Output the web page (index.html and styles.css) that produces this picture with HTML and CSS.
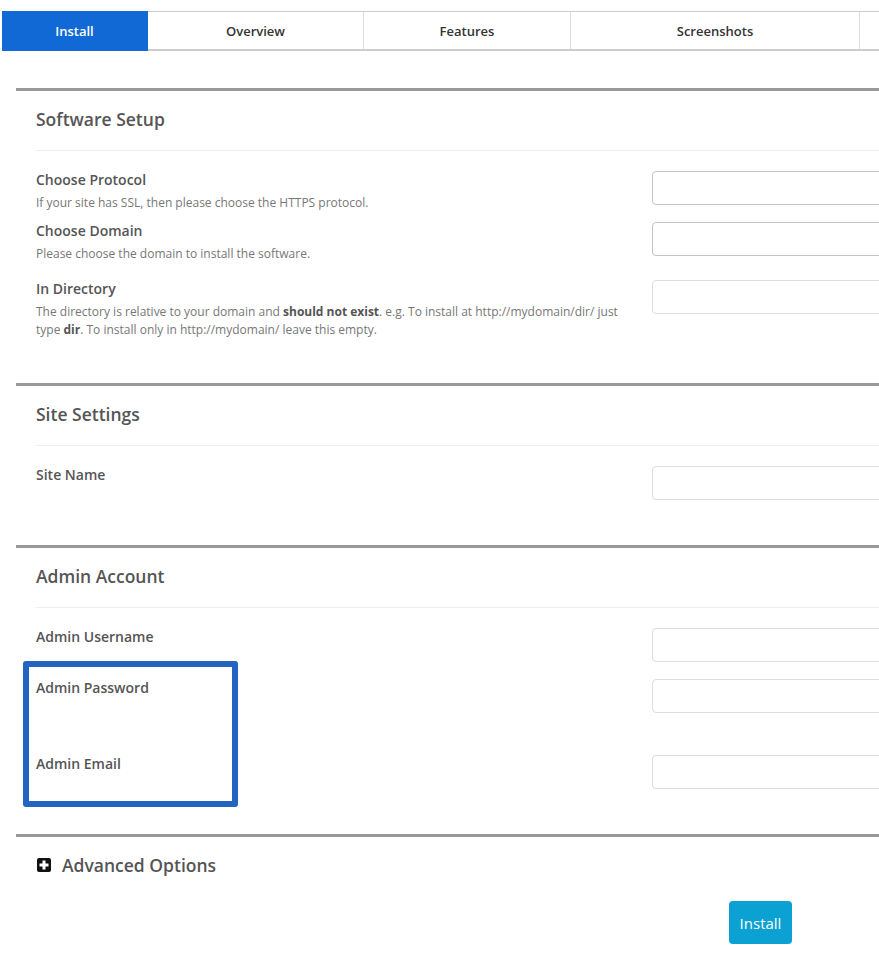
FILE: index.html
```html
<!DOCTYPE html>
<html lang="en">
<head>
  <meta charset="UTF-8">
  <meta name="viewport" content="width=device-width, initial-scale=1.0">
  <title>Install</title>
  <link rel="stylesheet" href="styles.css">
</head>
<body>
  <main class="page">
    <nav class="tabs">
      <a href="#" class="tab tab-active tab-install">Install</a>
      <a href="#" class="tab tab-overview">Overview</a>
      <a href="#" class="tab tab-features">Features</a>
      <a href="#" class="tab tab-screens">Screenshots</a>
      <a href="#" class="tab tab-more"></a>
    </nav>

    <section class="panel">
      <h2 class="panel-title">Software Setup</h2>
      <div class="row">
        <div class="info">
          <label class="label">Choose Protocol</label>
          <p class="desc">If your site has SSL, then please choose the HTTPS protocol.</p>
        </div>
        <input type="text" class="field field-select">
      </div>
      <div class="row row-wide">
        <div class="info">
          <label class="label">Choose Domain</label>
          <p class="desc">Please choose the domain to install the software.</p>
        </div>
        <input type="text" class="field field-select">
      </div>
      <div class="row">
        <div class="info">
          <label class="label">In Directory</label>
          <p class="desc">The directory is relative to your domain and <b>should not exist</b>. e.g. To install at http://mydomain/dir/ just type <b>dir</b>. To install only in http://mydomain/ leave this empty.</p>
        </div>
        <input type="text" class="field">
      </div>
    </section>

    <section class="panel">
      <h2 class="panel-title">Site Settings</h2>
      <div class="row">
        <div class="info">
          <label class="label">Site Name</label>
        </div>
        <input type="text" class="field">
      </div>
    </section>

    <section class="panel">
      <h2 class="panel-title">Admin Account</h2>
      <div class="highlight"></div>
      <div class="row">
        <div class="info">
          <label class="label">Admin Username</label>
        </div>
        <input type="text" class="field">
      </div>
      <div class="row row-pass">
        <div class="info">
          <label class="label">Admin Password</label>
        </div>
        <input type="password" class="field">
      </div>
      <div class="row">
        <div class="info">
          <label class="label">Admin Email</label>
        </div>
        <input type="text" class="field">
      </div>
    </section>

    <section class="panel panel-last">
      <h2 class="advanced">
        <svg class="plus" width="14" height="14" viewBox="0 0 14 14">
          <rect x="0" y="0" width="14" height="14" rx="2" fill="#111"/>
          <rect x="5.5" y="2.5" width="3" height="9" fill="#fff"/>
          <rect x="2.5" y="5.5" width="9" height="3" fill="#fff"/>
        </svg>
        Advanced Options
      </h2>
      <div class="actions">
        <button class="btn">Install</button>
      </div>
    </section>
  </main>
</body>
</html>
```

FILE: styles.css
```css
* {
  margin: 0;
  padding: 0;
  box-sizing: border-box;
}

html, body {
  overflow: hidden;
}

body {
  font-family: 'Open Sans', 'Liberation Sans', sans-serif;
  color: #555;
  background: #fff;
}

.page {
  width: 1200px;
  padding-top: 11px;
}

/* tabs */
.tabs {
  display: flex;
  margin-left: 2px;
  border-top: 1px solid #ccc;
  border-bottom: 2px solid #ccc;
  height: 40px;
}

.tab {
  display: flex;
  align-items: center;
  justify-content: center;
  font-size: 13px;
  font-weight: 600;
  color: #333;
  text-decoration: none;
  border-right: 1px solid #ddd;
}

.tab-active {
  background: #1169d6;
  color: #fff;
  margin-top: -1px;
  margin-bottom: -2px;
  border-right-color: #1169d6;
}

.tab-install { width: 146px; }
.tab-overview { width: 216px; }
.tab-features { width: 207px; }
.tab-screens { width: 289px; }
.tab-more { width: 200px; }

/* panels */
.panel {
  position: relative;
  margin-left: 16px;
  border-top: 3px solid #999;
  padding: 0 0 45px 20px;
}

.panel:first-of-type {
  margin-top: 37px;
  padding-bottom: 44px;
}

.panel-title {
  font-size: 17.5px;
  font-weight: 600;
  line-height: 20px;
  padding-top: 18px;
  padding-bottom: 21px;
  border-bottom: 1px solid #eee;
  margin-bottom: 20px;
  color: #555;
}

.row {
  display: flex;
  align-items: flex-start;
  min-height: 51px;
}

.row:last-of-type {
  min-height: 0;
}

.row-wide { min-height: 58px; }
.row-pass { min-height: 76px; }

.info {
  width: 600px;
  flex-shrink: 0;
}

.label {
  display: block;
  font-size: 14px;
  font-weight: 600;
  line-height: 18px;
  color: #555;
}

.desc {
  font-size: 12px;
  line-height: 18px;
  margin-top: 5px;
  color: #777;
}

.desc b {
  color: #555;
  font-weight: 700;
}

.field {
  margin-left: 16px;
  width: 320px;
  height: 34px;
  border: 1px solid #ddd;
  border-radius: 4px;
  background: #fff;
}

.field-select {
  border-color: #c4c4c4;
}

.highlight {
  position: absolute;
  left: 7px;
  top: 113px;
  width: 215px;
  height: 146px;
  border: 6px solid #2264c0;
  border-radius: 3px;
}

/* advanced + button */
.panel-last {
  padding-bottom: 0;
}

.advanced {
  display: flex;
  align-items: center;
  gap: 11px;
  font-size: 17.5px;
  font-weight: 600;
  line-height: 20px;
  padding-top: 18px;
  padding-left: 1px;
  color: #555;
}

.actions {
  margin-top: 26px;
  padding-left: 693px;
}

.btn {
  width: 63px;
  height: 43px;
  border: none;
  border-radius: 4px;
  background: #0ba1d3;
  color: #fff;
  font-family: 'Open Sans', sans-serif;
  font-size: 15px;
}
```
